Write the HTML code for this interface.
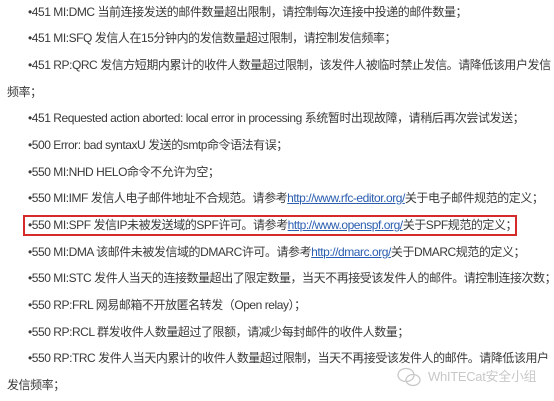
<!DOCTYPE html>
<html><head><meta charset="utf-8"><style>
html,body{margin:0;padding:0;background:#fff;width:554px;height:401px;overflow:hidden}
.l{position:absolute;left:28px;white-space:nowrap;font-family:"Liberation Sans","Noto Sans CJK SC",sans-serif;font-size:12px;color:#3a3a3a;line-height:16px;letter-spacing:-0.45px}
.w{left:7px}
a{color:#2a5db0;text-decoration:underline}
.box{position:absolute;left:23px;top:215px;width:490px;height:17px;border:2px solid #d42a2a}
.wm{position:absolute;left:428px;top:368px;font-family:"Liberation Sans","Noto Sans CJK SC",sans-serif;font-size:13px;color:#c8c8c8;white-space:nowrap;line-height:18px;letter-spacing:-0.3px}
</style></head><body>
<div class="l" style="top:4px">•451 MI:DMC 当前连接发送的邮件数量超出限制，请控制每次连接中投递的邮件数量；</div>
<div class="l" style="top:30px">•451 MI:SFQ 发信人在15分钟内的发信数量超过限制，请控制发信频率；</div>
<div class="l" style="top:57px">•451 RP:QRC 发信方短期内累计的收件人数量超过限制，该发件人被临时禁止发信。请降低该用户发信</div>
<div class="l w" style="top:84px">频率；</div>
<div class="l" style="top:110px">•451 Requested action aborted: local error in processing 系统暂时出现故障，请稍后再次尝试发送；</div>
<div class="l" style="top:137px">•500 Error: bad syntaxU 发送的smtp命令语法有误；</div>
<div class="l" style="top:164px">•550 MI:NHD HELO命令不允许为空；</div>
<div class="l" style="top:190px">•550 MI:IMF 发信人电子邮件地址不合规范。请参考<a>http://www.rfc-editor.org/</a>关于电子邮件规范的定义；</div>
<div class="l" style="top:217px">•550 MI:SPF 发信IP未被发送域的SPF许可。请参考<a>http://www.openspf.org/</a>关于SPF规范的定义；</div>
<div class="box"></div>
<div class="l" style="top:244px">•550 MI:DMA 该邮件未被发信域的DMARC许可。请参考<a>http://dmarc.org/</a>关于DMARC规范的定义；</div>
<div class="l" style="top:270px">•550 MI:STC 发件人当天的连接数量超出了限定数量，当天不再接受该发件人的邮件。请控制连接次数；</div>
<div class="l" style="top:297px">•550 RP:FRL 网易邮箱不开放匿名转发（Open relay）；</div>
<div class="l" style="top:324px">•550 RP:RCL 群发收件人数量超过了限额，请减少每封邮件的收件人数量；</div>
<div class="l" style="top:350px">•550 RP:TRC 发件人当天内累计的收件人数量超过限制，当天不再接受该发件人的邮件。请降低该用户</div>
<div class="l w" style="top:377px">发信频率；</div>
<svg style="position:absolute;left:396px;top:366px" width="26" height="22" viewBox="0 0 26 22"><g fill="none" stroke="#c8c8c8" stroke-width="1.3"><ellipse cx="10" cy="9" rx="8" ry="6.5"/><ellipse cx="17" cy="14" rx="7" ry="5.5"/></g></svg>
<div class="wm">WhITECat安全小组</div>
</body></html>
